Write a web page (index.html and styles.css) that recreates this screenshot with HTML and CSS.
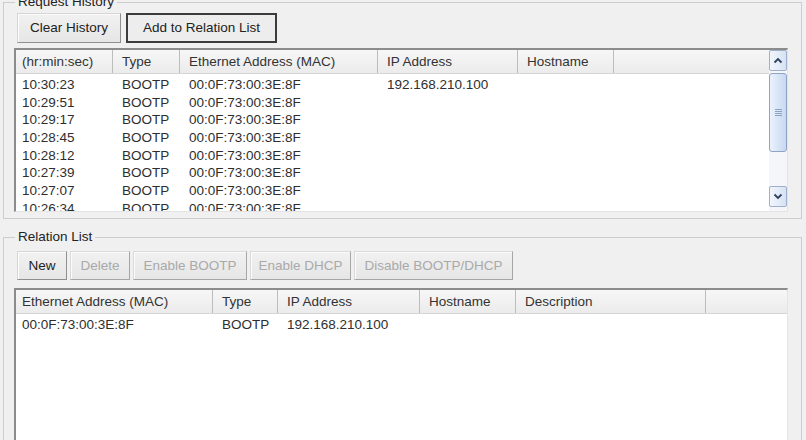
FILE: index.html
```html
<!DOCTYPE html>
<html>
<head>
<meta charset="utf-8">
<link rel="stylesheet" href="styles.css">
</head>
<body>
<fieldset class="group group-req">
  <legend>Request History</legend>
  <div class="btnrow btnrow-req">
    <div class="btn b-clear">Clear History</div>
    <div class="btn btn-default b-add">Add to Relation List</div>
  </div>
  <div class="list list-req">
    <div class="list-main">
      <div class="hdr cols-req">
        <div class="c first">(hr:min:sec)</div>
        <div class="c">Type</div>
        <div class="c">Ethernet Address (MAC)</div>
        <div class="c">IP Address</div>
        <div class="c">Hostname</div>
        <div class="c last"></div>
      </div>
      <div class="rows">
        <div class="row cols-req"><div class="c first">10:30:23</div><div class="c">BOOTP</div><div class="c">00:0F:73:00:3E:8F</div><div class="c">192.168.210.100</div><div class="c"></div><div class="c"></div></div>
        <div class="row cols-req"><div class="c first">10:29:51</div><div class="c">BOOTP</div><div class="c">00:0F:73:00:3E:8F</div><div class="c"></div><div class="c"></div><div class="c"></div></div>
        <div class="row cols-req"><div class="c first">10:29:17</div><div class="c">BOOTP</div><div class="c">00:0F:73:00:3E:8F</div><div class="c"></div><div class="c"></div><div class="c"></div></div>
        <div class="row cols-req"><div class="c first">10:28:45</div><div class="c">BOOTP</div><div class="c">00:0F:73:00:3E:8F</div><div class="c"></div><div class="c"></div><div class="c"></div></div>
        <div class="row cols-req"><div class="c first">10:28:12</div><div class="c">BOOTP</div><div class="c">00:0F:73:00:3E:8F</div><div class="c"></div><div class="c"></div><div class="c"></div></div>
        <div class="row cols-req"><div class="c first">10:27:39</div><div class="c">BOOTP</div><div class="c">00:0F:73:00:3E:8F</div><div class="c"></div><div class="c"></div><div class="c"></div></div>
        <div class="row cols-req"><div class="c first">10:27:07</div><div class="c">BOOTP</div><div class="c">00:0F:73:00:3E:8F</div><div class="c"></div><div class="c"></div><div class="c"></div></div>
        <div class="row cols-req"><div class="c first">10:26:34</div><div class="c">BOOTP</div><div class="c">00:0F:73:00:3E:8F</div><div class="c"></div><div class="c"></div><div class="c"></div></div>
      </div>
    </div>
    <div class="vscroll">
      <div class="sb-btn">
        <svg width="10" height="7" viewBox="0 0 10 7"><polyline points="1.5,5.5 5,2 8.5,5.5" fill="none" stroke="#2f4060" stroke-width="1.8"/></svg>
      </div>
      <div class="sb-thumb">
        <svg width="7" height="8" viewBox="0 0 7 8"><g stroke="#8ea2c4" stroke-width="1"><line x1="0" y1="0.5" x2="7" y2="0.5"/><line x1="0" y1="2.5" x2="7" y2="2.5"/><line x1="0" y1="4.5" x2="7" y2="4.5"/><line x1="0" y1="6.5" x2="7" y2="6.5"/></g></svg>
      </div>
      <div class="sb-track"></div>
      <div class="sb-btn">
        <svg width="10" height="7" viewBox="0 0 10 7"><polyline points="1.5,1.5 5,5 8.5,1.5" fill="none" stroke="#2f4060" stroke-width="1.8"/></svg>
      </div>
    </div>
  </div>
</fieldset>

<fieldset class="group group-rel">
  <legend>Relation List</legend>
  <div class="btnrow btnrow-rel">
    <div class="btn b-new">New</div>
    <div class="btn disabled b-del">Delete</div>
    <div class="btn disabled b-eb">Enable BOOTP</div>
    <div class="btn disabled b-ed">Enable DHCP</div>
    <div class="btn disabled b-dis">Disable BOOTP/DHCP</div>
  </div>
  <div class="list list-rel">
    <div class="list-main">
      <div class="hdr cols-rel">
        <div class="c first">Ethernet Address (MAC)</div>
        <div class="c">Type</div>
        <div class="c">IP Address</div>
        <div class="c">Hostname</div>
        <div class="c">Description</div>
        <div class="c last"></div>
      </div>
      <div class="rows">
        <div class="row cols-rel"><div class="c first">00:0F:73:00:3E:8F</div><div class="c">BOOTP</div><div class="c">192.168.210.100</div><div class="c"></div><div class="c"></div><div class="c"></div></div>
      </div>
    </div>
  </div>
</fieldset>
</body>
</html>
```

FILE: styles.css
```css
html, body {
  margin: 0;
  padding: 0;
}
body {
  width: 806px;
  height: 440px;
  overflow: hidden;
  background: #f0f0f0;
  font-family: "Liberation Sans", Arial, sans-serif;
  font-size: 13.5px;
  line-height: 16px;
  color: #2b2b2b;
}

.group {
  margin: 0 4px 0 3px;
  padding: 0 13px 6px 10px;
  border: 1px solid #cdcdcd;
  min-width: 0;
  min-inline-size: 0;
}
.group legend {
  padding: 0 3px;
  margin-left: 1px;
  line-height: 16px;
  color: #222;
}
.group-req {
  margin-top: -6px;
}
.group-rel {
  margin-top: 10px;
  padding-bottom: 0;
  border-bottom: none;
}

.btnrow {
  display: flex;
  margin-left: 3px;
}
.btnrow-req {
  margin-top: 3px;
  height: 30px;
  gap: 5px;
}
.btnrow-rel {
  margin-top: 6px;
  height: 29px;
  gap: 3px;
}
.btn {
  box-sizing: border-box;
  height: 100%;
  display: flex;
  align-items: center;
  justify-content: center;
  white-space: nowrap;
  background: linear-gradient(#f1f1f1, #e6e6e6);
  border: 1px solid;
  border-color: #d6d6d6 #8f8f8f #8f8f8f #d6d6d6;
  box-shadow: inset 1px 1px 0 #fbfbfb;
  color: #222;
}
.btn-default {
  border: 2px solid #3c3c3c;
  box-shadow: none;
  background: #ededed;
}
.btn.disabled {
  color: #a9a9a9;
  border-color: #dadada #a6a6a6 #a6a6a6 #dadada;
}
.b-clear { width: 104px; }
.b-add { width: 151px; }
.b-new { width: 50px; }
.b-del { width: 60px; }
.b-eb { width: 114px; }
.b-ed { width: 101px; }
.b-dis { width: 159px; }

.list {
  display: flex;
  box-sizing: border-box;
  background: #fff;
  border-style: solid;
  border-width: 2px 1px 1px 2px;
  border-color: #8c8c8c #e4e4e4 #e4e4e4 #8c8c8c;
  overflow: hidden;
}
.list-req {
  margin-top: 5px;
  height: 164px;
}
.list-rel {
  margin-top: 8px;
  height: 180px;
}
.list-main {
  flex: 1;
  min-width: 0;
  display: flex;
  flex-direction: column;
  overflow: hidden;
}
.hdr {
  display: grid;
  height: 23px;
  flex: none;
  background: linear-gradient(#f7f7f7, #ebebeb);
  border-bottom: 1px solid #d4d4d4;
  color: #333;
}
.hdr .c {
  line-height: 23px;
  border-right: 1px solid #bdbdbd;
}
.hdr .c.last {
  border-right: none;
}
.list-rel .hdr .c.last {
  border-right: none;
}
.c {
  padding-left: 9px;
  white-space: nowrap;
  overflow: hidden;
}
.c.first {
  padding-left: 6px;
}
.cols-req {
  grid-template-columns: 97px 67px 198px 140px 96px 1fr;
}
.cols-rel {
  grid-template-columns: 197px 65px 142px 96px 190px 1fr;
}
.rows {
  padding-top: 2px;
}
.row {
  display: grid;
  height: 17.7px;
  line-height: 17.7px;
  color: #2e2e2e;
}

.vscroll {
  flex: none;
  width: 18px;
  box-sizing: border-box;
  padding: 0 0 4px 0;
  background: #f5f6f9;
  display: flex;
  flex-direction: column;
}
.sb-btn {
  box-sizing: border-box;
  height: 21px;
  flex: none;
  border: 1px solid #9dafcc;
  border-radius: 2px;
  background: linear-gradient(to right, #f2f6fc, #d6e2f3);
  display: flex;
  align-items: center;
  justify-content: center;
}
.sb-thumb {
  box-sizing: border-box;
  margin-top: 2px;
  height: 79px;
  flex: none;
  border: 1px solid #8ea3c6;
  border-radius: 3px;
  background: linear-gradient(to right, #ebf2fc, #c7d8f1);
  display: flex;
  align-items: center;
  justify-content: center;
}
.sb-track {
  flex: 1;
}
```
